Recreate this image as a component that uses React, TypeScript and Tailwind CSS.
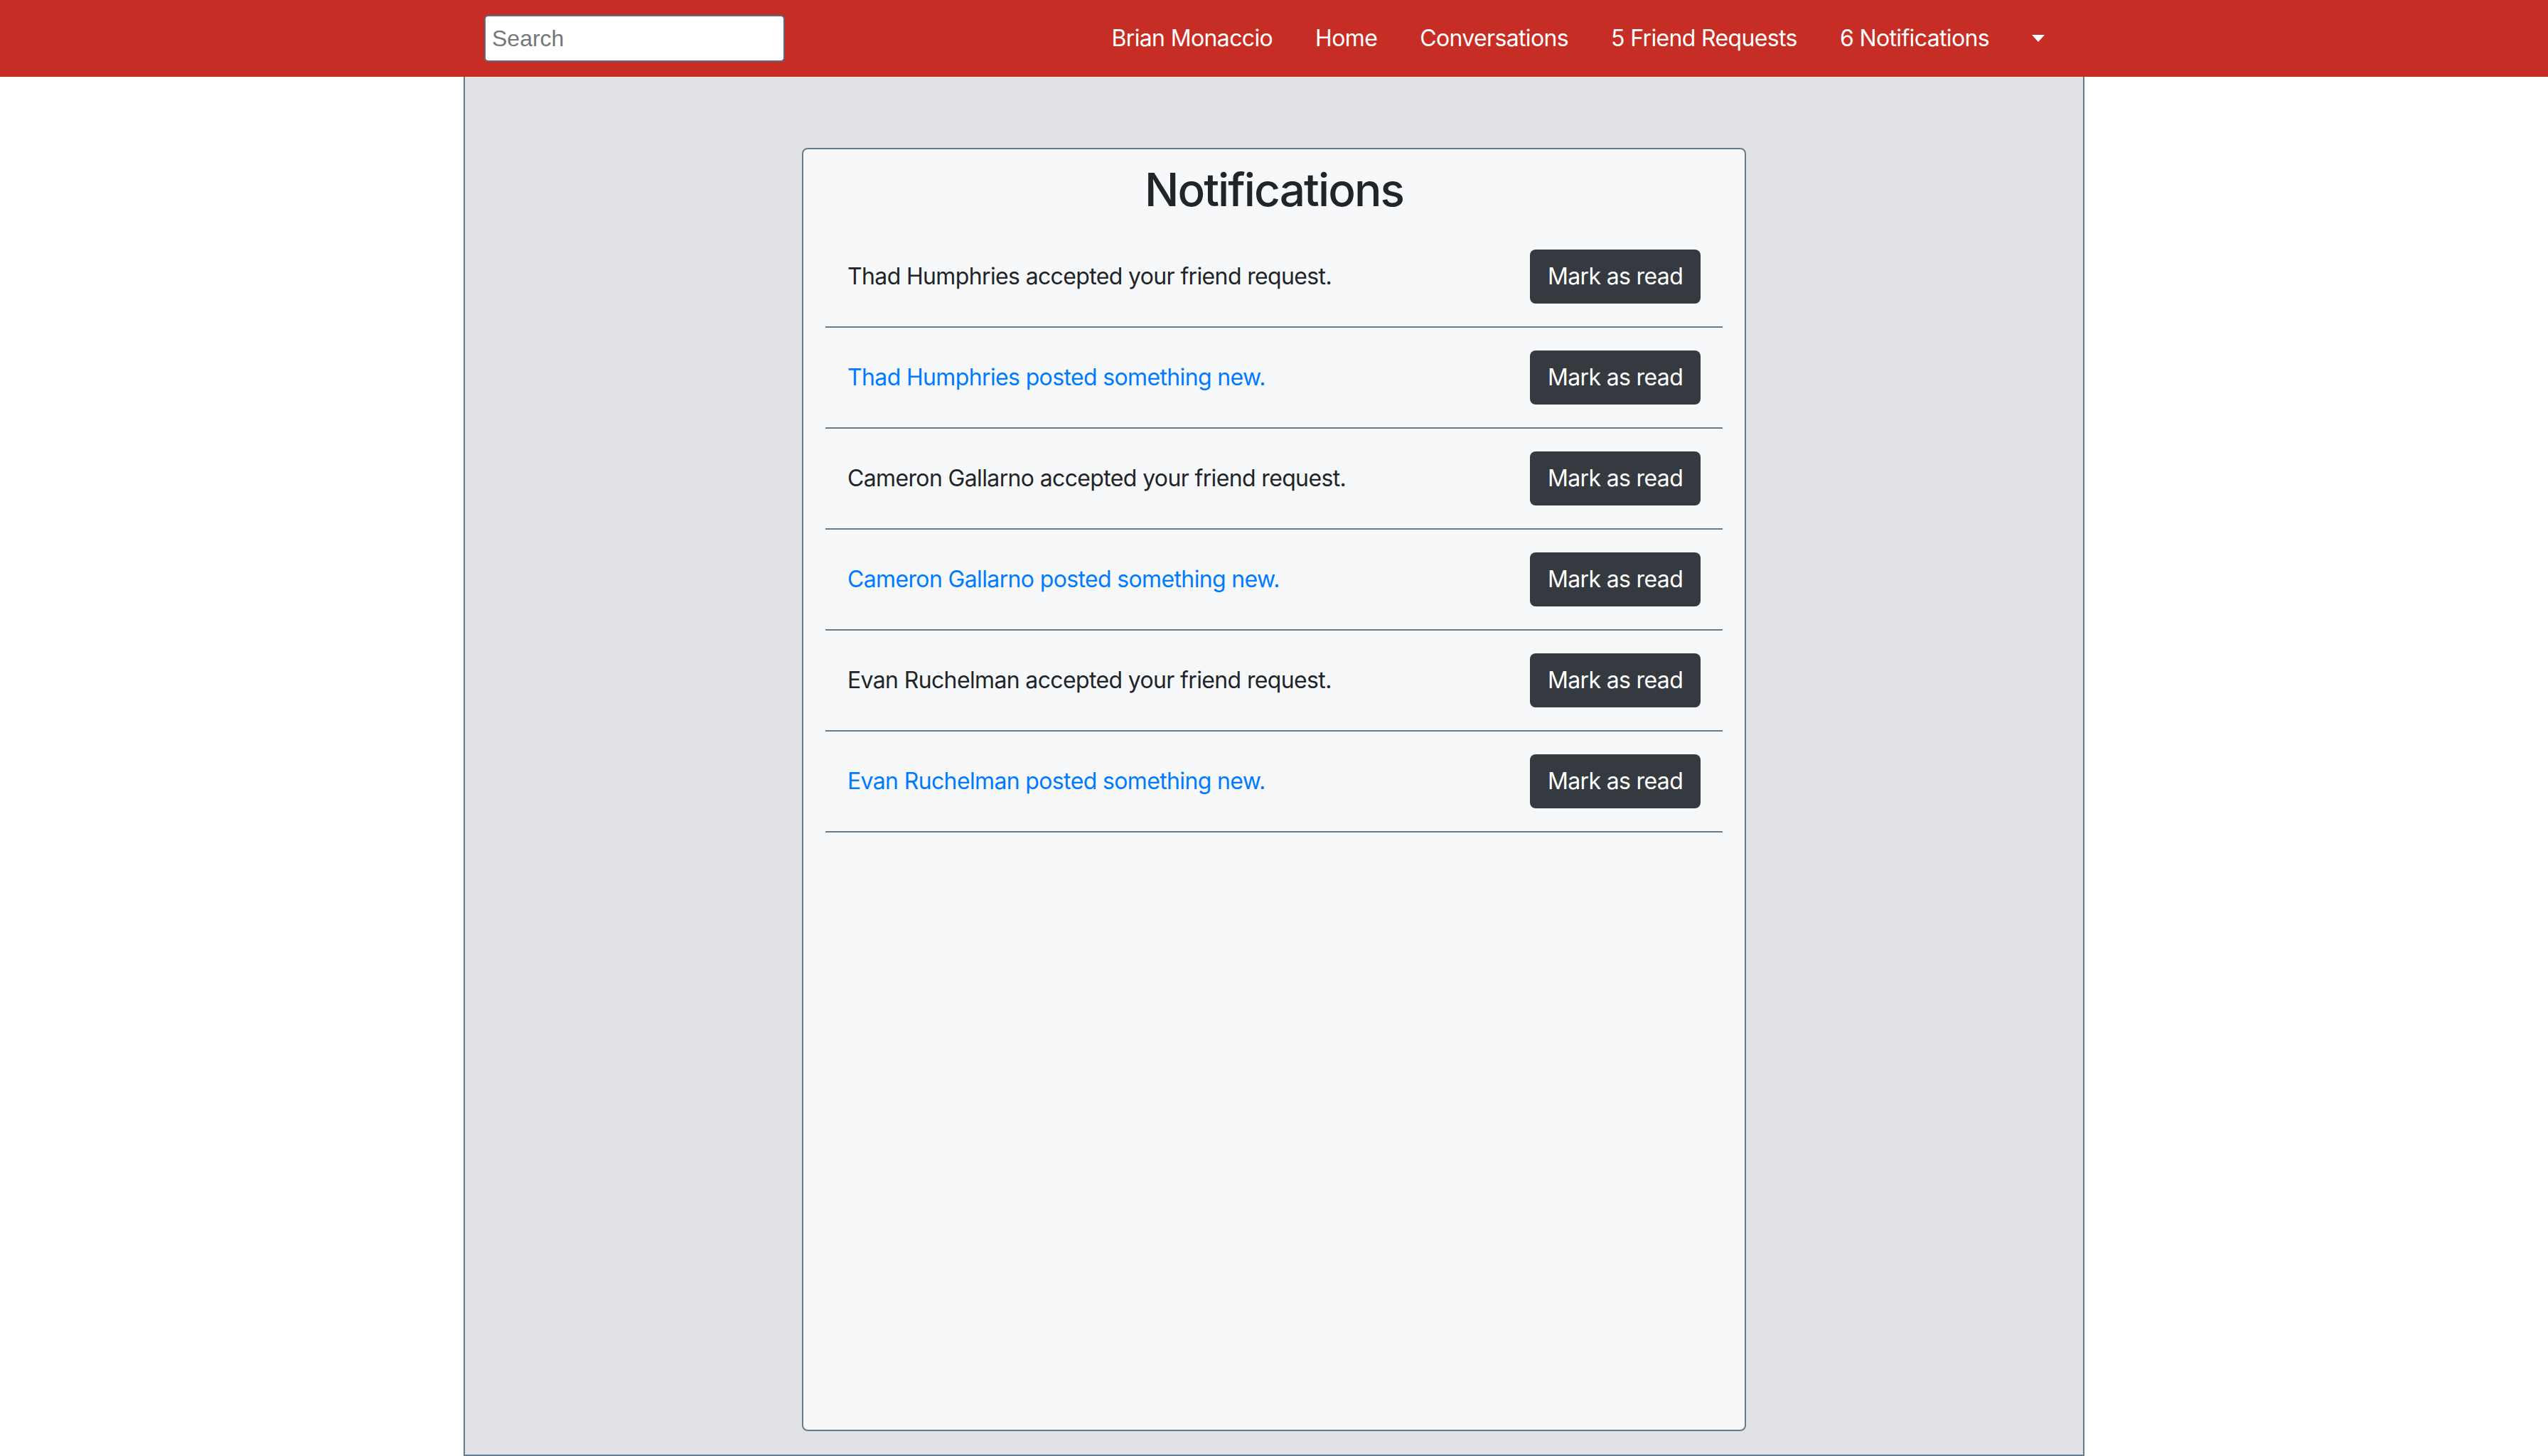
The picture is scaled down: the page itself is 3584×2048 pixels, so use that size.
import React from "react";

const rows: { text: string; link: boolean }[] = [
  { text: "Thad Humphries accepted your friend request.", link: false },
  { text: "Thad Humphries posted something new.", link: true },
  { text: "Cameron Gallarno accepted your friend request.", link: false },
  { text: "Cameron Gallarno posted something new.", link: true },
  { text: "Evan Ruchelman accepted your friend request.", link: false },
  { text: "Evan Ruchelman posted something new.", link: true },
];

export default function App() {
  return (
    <div className="min-h-screen bg-white font-['Inter','Noto_Sans',sans-serif]">
      <nav className="h-[108px] w-full bg-[#c62e25]">
        <div className="mx-auto flex h-full w-[2280px] items-center pl-[29px] pr-[56px]">
          <input
            type="text"
            placeholder="Search"
            className="h-[66px] w-[423px] rounded-[6px] border-2 border-[#5c6a78] bg-white pl-[9px] font-['Liberation_Sans',Arial,sans-serif] text-[32px] text-[#333] outline-none placeholder:text-[#777]"
          />
          <div className="ml-auto flex items-center gap-[60px] text-[32px] leading-[48px] tracking-[-0.02em] text-white">
            <span>Brian Monaccio</span>
            <span>Home</span>
            <span>Conversations</span>
            <span>5 Friend Requests</span>
            <span>6 Notifications</span>
            <span className="h-0 w-0 border-x-[9.5px] border-t-[10px] border-x-transparent border-t-white" />
          </div>
        </div>
      </nav>
      <main className="mx-auto h-[1940px] w-[2280px] border-x-2 border-b-2 border-[#687a8e] bg-[#e1e2e6] pt-[100px]">
        <div className="mx-auto h-[1805px] w-[1328px] rounded-[8px] border-2 border-[#687a8e] bg-[#f7f8fa] px-[31px] pt-[18px]">
          <h2 className="mb-[14px] text-center text-[64px] font-medium leading-[77px] tracking-[-0.03em] text-[#212529]">
            Notifications
          </h2>
          <div className="flex flex-col">
            {rows.map((r, i) => (
              <div
                key={i}
                className="flex items-center justify-between border-b-2 border-[#687a8e] px-[31px] py-[32px]"
              >
                <span
                  className={
                    "text-[32px] leading-[48px] tracking-[-0.02em] " +
                    (r.link ? "text-[#007bff]" : "text-[#212529]")
                  }
                >
                  {r.text}
                </span>
                <button className="h-[76px] w-[240px] rounded-[8px] bg-[#343a40] text-[32px] leading-[48px] tracking-[-0.02em] text-white">
                  Mark as read
                </button>
              </div>
            ))}
          </div>
        </div>
      </main>
    </div>
  );
}
